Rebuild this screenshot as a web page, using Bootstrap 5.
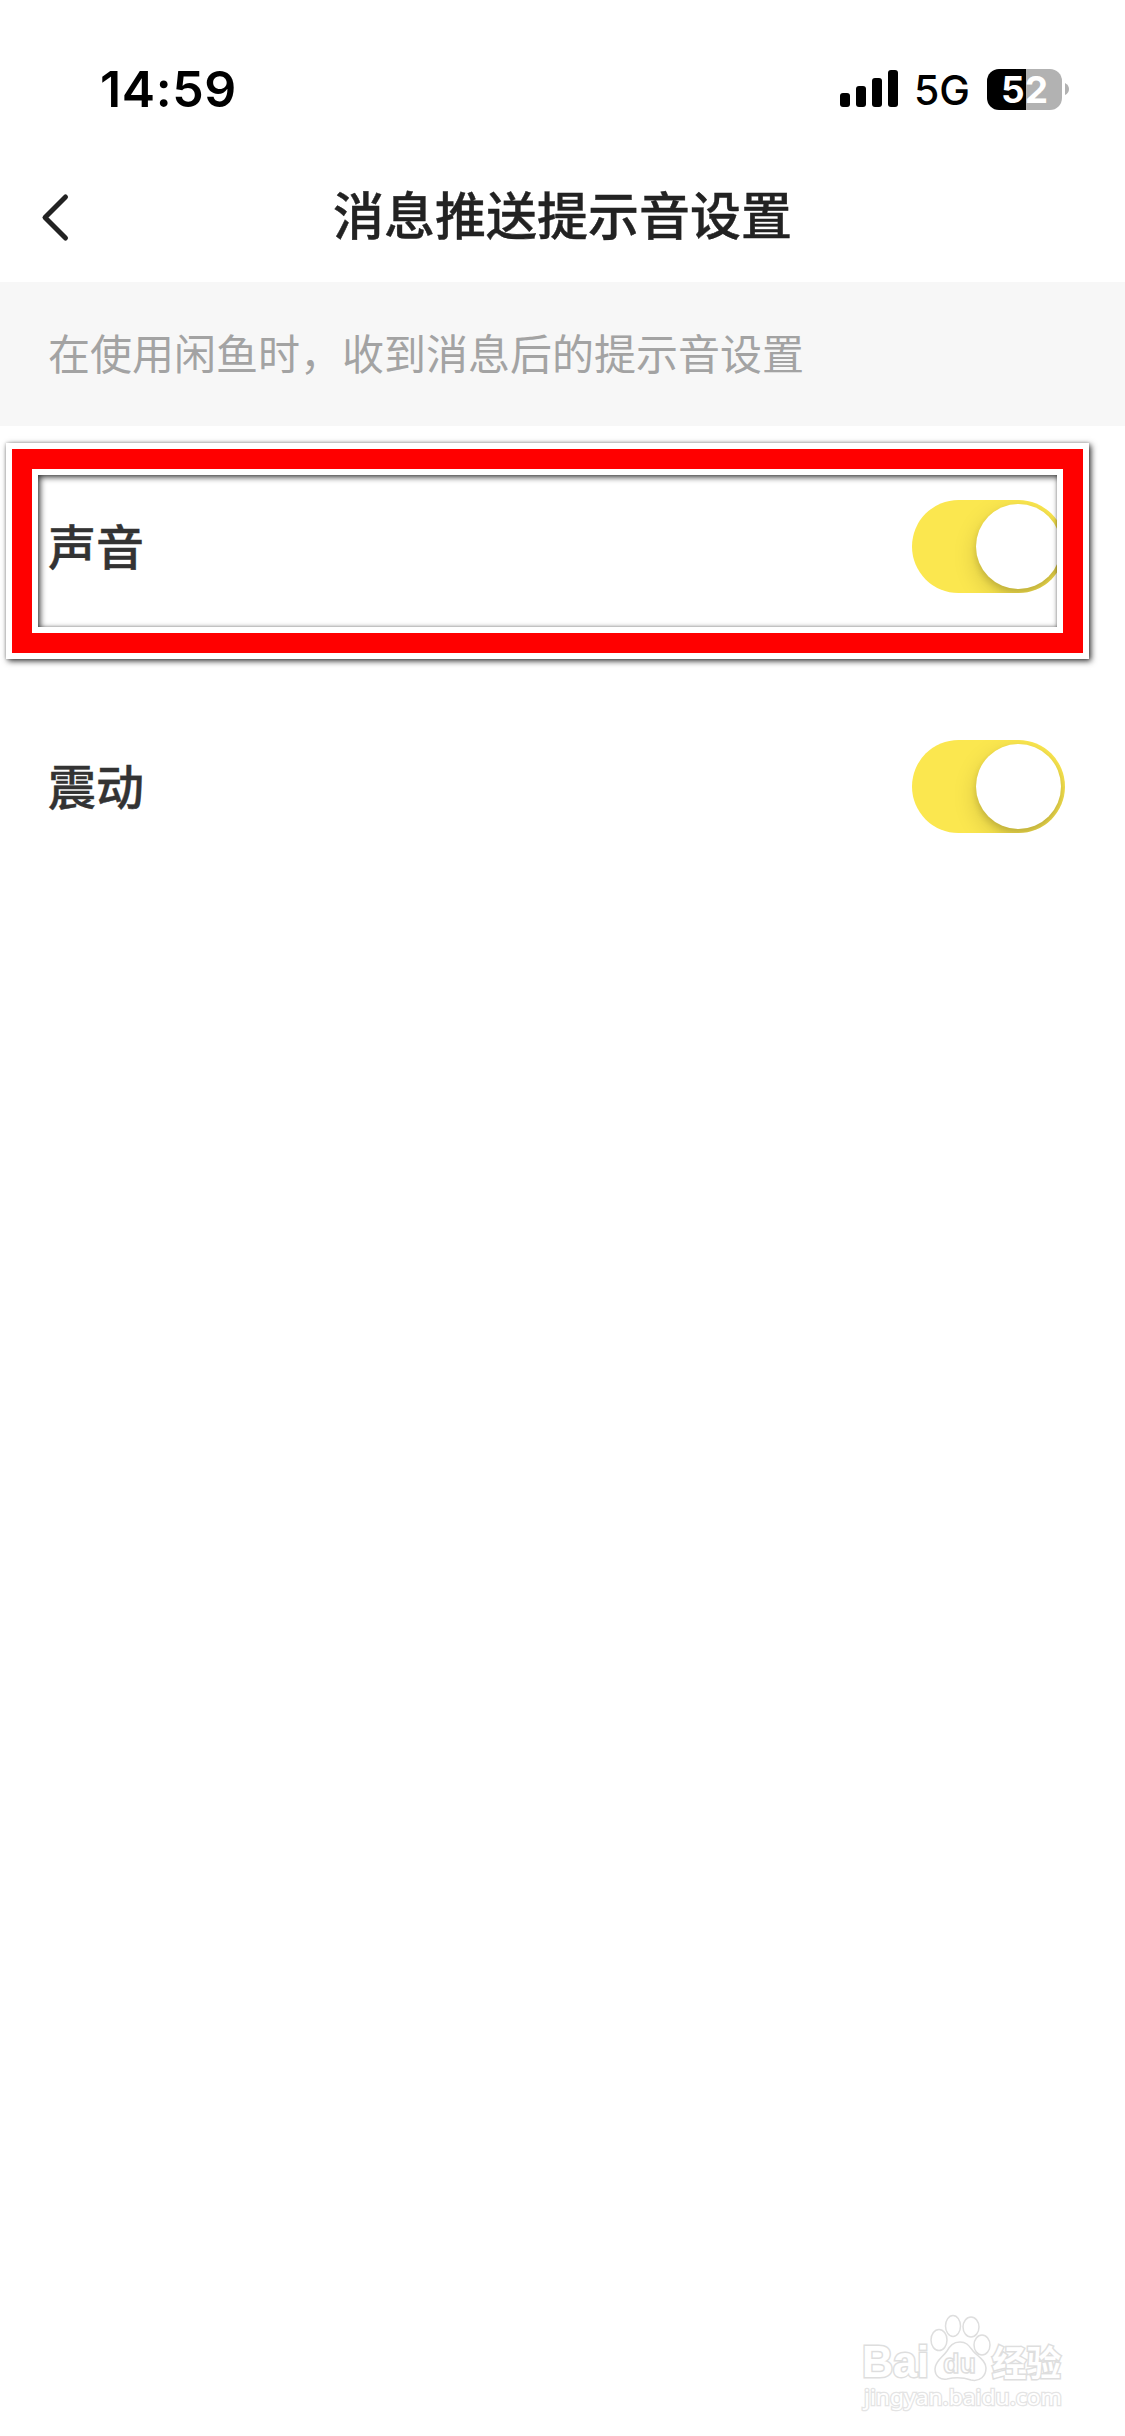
<!DOCTYPE html>
<html lang="zh-CN">
<head>
<meta charset="utf-8">
<meta name="viewport" content="width=device-width, initial-scale=1">
<title>消息推送提示音设置</title>
<link href="https://cdn.jsdelivr.net/npm/bootstrap@5.3.0/dist/css/bootstrap.min.css" rel="stylesheet">
<style>
body{font-family:"Noto Sans CJK SC","Noto Sans",sans-serif;background:#fff;color:#222}
.screen{width:1125px;height:2436px;overflow:hidden}
.status-bar{height:172px;padding:6px 56px 0 100px;font-family:Inter,"Liberation Sans",sans-serif;color:#000}
.clock{font-size:50px;font-weight:600;line-height:1;letter-spacing:.6px}
.net{font-size:41px;font-weight:500;line-height:1;margin-left:16px;padding-top:3px}
.battery{width:75px;height:41px;border-radius:12px;background:linear-gradient(90deg,#000 39px,#b2b2b2 39px);color:#fff;font-size:37px;font-weight:700;line-height:1;margin-left:17px}
.title-bar{height:110px;padding:0 40px 20px}
.title-bar h1{font-size:51px;font-weight:500;line-height:1;padding-bottom:7px;-webkit-text-stroke:.4px #222}
.side-slot{width:30px}
.hint{height:144px;padding:0 48px 4px;background:#f7f7f7;color:#a3a3a3;font-size:42px;line-height:1}
.setting{height:240px;padding:0 60px 0 48px;font-size:48px;font-weight:500;line-height:1;color:#333}
.setting-name{padding-bottom:4px;-webkit-text-stroke:.4px #333}
.toggle{width:153px;height:93px;border-radius:47px;background:#fbe74f;padding-right:4px}
.knob{width:85px;height:85px;border-radius:50%;background:#fff;box-shadow:0 9px 24px rgba(0,0,0,.15),0 3px 6px rgba(0,0,0,.1),0 6px 9px rgba(0,0,0,.05)}
.marker{left:6px;top:17px;width:1083px;height:216px;border:6px solid #fff;box-shadow:2px 2px 6px rgba(0,0,0,.8),0 0 3px rgba(0,0,0,.2)}
.marker-red{border:20px solid #f00}
.marker-in{border:6px solid #fff;box-shadow:inset 2px 2px 6px rgba(0,0,0,.8),inset 0 0 3px rgba(0,0,0,.2)}
.mark-foot{padding:0 54px 18px 0}
</style>
<script src="https://cdn.jsdelivr.net/npm/bootstrap@5.3.0/dist/js/bootstrap.bundle.min.js"></script>
</head>
<body>
<main class="screen d-flex flex-column">
  <div class="status-bar d-flex align-items-center justify-content-between">
    <span class="clock">14:59</span>
    <div class="d-flex align-items-center">
      <svg width="59" height="38" viewBox="0 0 59 38"><rect x="1" y="23" width="10" height="14" rx="3"/><rect x="17" y="16" width="10" height="21" rx="3"/><rect x="33" y="8" width="10" height="29" rx="3"/><rect x="49" width="10" height="37" rx="3"/></svg>
      <span class="net">5G</span>
      <span class="battery d-flex align-items-center justify-content-center">52</span>
      <svg width="7" height="14" viewBox="0 0 7 14"><path d="M3 1Q7 3 7 7T3 13Z" fill="#b2b2b2"/></svg>
    </div>
  </div>
  <header class="title-bar d-flex align-items-center justify-content-between">
    <svg class="side-slot" height="50" viewBox="0 0 30 50"><path d="M25.500 5 5 25.500 25.500 46" fill="none" stroke="#222" stroke-width="5" stroke-linecap="round" stroke-linejoin="round"/></svg>
    <h1 class="m-0">消息推送提示音设置</h1>
    <span class="side-slot"></span>
  </header>
  <div class="hint d-flex align-items-center">在使用闲鱼时，收到消息后的提示音设置</div>
  <section>
    <div class="setting position-relative d-flex align-items-center justify-content-between">
      <span class="setting-name">声音</span>
      <div class="toggle overflow-hidden d-flex align-items-center justify-content-end"><div class="knob"></div></div>
      <div class="marker position-absolute"><div class="marker-red h-100"><div class="marker-in h-100"></div></div></div>
    </div>
    <div class="setting d-flex align-items-center justify-content-between">
      <span class="setting-name">震动</span>
      <div class="toggle overflow-hidden d-flex align-items-center justify-content-end"><div class="knob"></div></div>
    </div>
  </section>
  <footer class="mark-foot mt-auto d-flex justify-content-end">
    <svg width="212" height="108" viewBox="0 0 212 108" fill="#fff" stroke="#dedede" stroke-width="1.500" font-weight="700">
      <text x="3" y="67" font-family="Liberation Sans, Arial, sans-serif" font-size="44" textLength="67" lengthAdjust="spacingAndGlyphs" stroke-width="3" paint-order="stroke">Bai</text>
      <ellipse cx="80" cy="30" rx="8" ry="10.500"/>
      <ellipse cx="94" cy="16" rx="7.500" ry="10.500"/>
      <ellipse cx="112" cy="17" rx="8" ry="10"/>
      <ellipse cx="123" cy="35" rx="8" ry="10"/>
      <path d="M101 32C94 32 91 36 88 41 84 47 76 51 76 59 76 67 82 70 88 69 97 67 106 68 112 70 121 72 127 66 127 58 127 50 118 46 114 41 110 36 108 32 101 32Z"/>
      <text x="84" y="63" font-family="Liberation Sans, Arial, sans-serif" font-size="28" textLength="33" lengthAdjust="spacingAndGlyphs">du</text>
      <text x="133" y="66" font-family="Noto Sans CJK SC, sans-serif" font-size="35" textLength="69" lengthAdjust="spacingAndGlyphs" stroke-width="3" paint-order="stroke">经验</text>
      <text x="5" y="95" font-family="Noto Sans, sans-serif" font-size="22" font-weight="400" textLength="198" lengthAdjust="spacingAndGlyphs" stroke-width="2.500" stroke="#e4e4e4" paint-order="stroke">jingyan.baidu.com</text>
    </svg>
  </footer>
</main>
</body>
</html>
